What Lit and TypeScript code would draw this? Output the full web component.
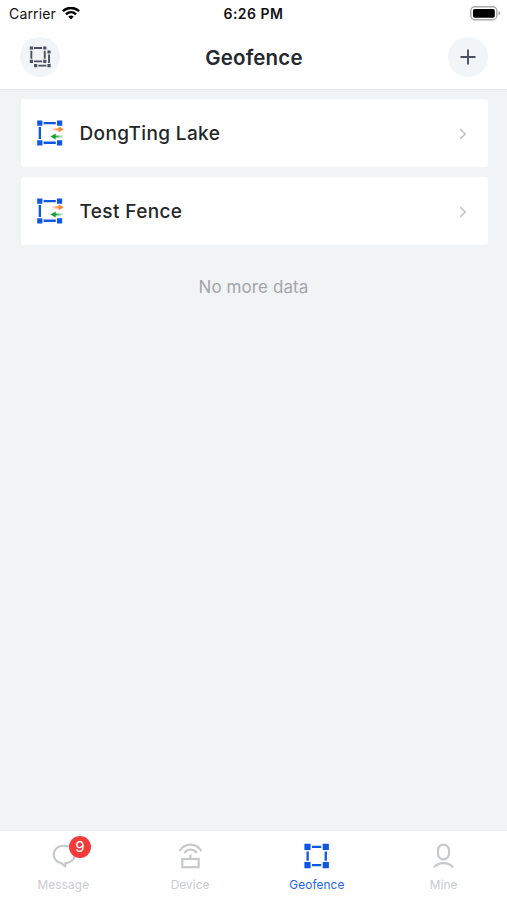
import { LitElement, html, svg, css } from "lit";
import { customElement, property } from "lit/decorators.js";

const wifi = html`<svg width="18" height="14" viewBox="0 0 18 14" fill="none" stroke="#000" stroke-width="2.5">
  <path d="M.9 4.2C5.5-.2 12.5-.2 17.1 4.2" />
  <path d="M4 7.4C6.9 4.6 11.1 4.6 14 7.4" />
  <path d="M6.3 9.6C7.900 8.100 10.100 8.100 11.700 9.600L9 12.400Z" fill="#000" stroke="none" />
</svg>`;

const battery = html`<svg width="31" height="15" viewBox="0 0 31 15">
  <rect x=".8" y=".8" width="26" height="13" rx="4" fill="#fff" stroke="#a9a9a9" stroke-width="1.4" />
  <rect x="3" y="3" width="21.8" height="8.8" rx="1.8" fill="#000" />
  <path d="M28.4 5.2C31 5.8 31 8.8 28.4 9.4Z" fill="#a9a9a9" />
</svg>`;

const layers = html`<svg width="24" height="24" viewBox="0 0 24 24" fill="#4b5160">
  <path d="M1.8 1.4H5v3.2H1.8zM15.2 1.4h3.2v3.2h-3.2zM1.8 14.8H5V18H1.8zM15.2 14.8h3.2V18h-3.2zM19.4 5.4h3.2v3.2h-3.2zM6 19h3.2v3.2H6zM19.4 19h3.2v3.2h-3.2z" />
  <path d="M6 2.1h8.2V4H6zM6 15.4h8.2v1.9H6zM2.4 5.7h1.9v8.1H2.4zM15.8 5.7h1.9v8.1h-1.9zM20.1 9.6H22V18h-1.9zM10.2 19.7h8.2v1.9h-8.2z" />
</svg>`;

const plus = html`<svg width="24" height="24" viewBox="0 0 24 24" stroke="#4b5160" stroke-width="1.9">
  <path d="M12 4.5v15M4.5 12h15" />
</svg>`;

const fence = html`<svg width="28" height="28" viewBox="0 0 28 28">
  <defs>
    <linearGradient id="out"><stop offset="0" stop-color="#fb8c3c" stop-opacity=".1" /><stop offset=".6" stop-color="#fb8432" /></linearGradient>
    <linearGradient id="in"><stop offset=".4" stop-color="#12a336" /><stop offset="1" stop-color="#12a336" stop-opacity=".1" /></linearGradient>
  </defs>
  <path d="M1.2 1.5h5.2v5.2H1.2zM21 1.5h5.2v5.2H21zM1.2 21.2h5.2v5.2H1.2zM21 21.2h5.2v5.2H21z" fill="#0c58e4" />
  <path d="M7.6 3h12.2v2.3H7.6zM7.6 22.6h12.2v2.3H7.6zM2.7 8H5v12H2.7z" fill="#0c58e4" />
  <path d="M15.5 9.2h7.2V7.4l5.1 2.9-5.1 2.9v-1.8h-7.2z" fill="url(#out)" />
  <path d="M27.5 16.5h-7.8v-2l-5.4 3 5.4 3v-2h7.8z" fill="url(#in)" />
</svg>`;

const chevron = html`<svg class="chevron" width="8" height="12" viewBox="0 0 8 12" fill="none" stroke="#c3c4c6" stroke-width="1.6">
  <path d="M1.2 1.2 6.2 6 1.2 10.8" />
</svg>`;

const icons = {
  message: svg`<path d="M13.6 4h4.8a8.400 8.400 0 0 1 2.2 16.500L17.200 21.400v3L13.400 21.200A8.640 8.640 0 0 1 13.600 4Z" fill="none" stroke="#c5c9cf" stroke-width="2.200" stroke-linejoin="round" />`,
  device: svg`<g fill="none" stroke="#c6c8ca" stroke-width="2.2">
    <path d="M4.600 9C9.900.5 21.100.5 26.400 9M9.300 11C12.500 6.300 18.500 6.300 21.700 11M15.500 12.500v5" />
    <rect x="7.300" y="17" width="16.400" height="8.200" /></g>`,
  geofence: svg`<path d="M3.400 1.800h6.200V8H3.400zM21.700 1.800h6.200V8h-6.200zM3.400 20.100h6.200v6.200H3.400zM21.700 20.100h6.200v6.200h-6.200z" fill="#0c58e4" />
    <path d="M11 3.800h9.200v2.300H11zM11 22h9.200v2.300H11zM5.500 9.600h2.300v9.100H5.500zM23.600 9.600h2.300v9.100h-2.300z" fill="#0c58e4" />`,
  mine: svg`<g fill="none" stroke="#c6c8ca" stroke-width="2.200">
    <rect x="10" y="2.700" width="11" height="14.600" rx="5.500" />
    <path d="M5.800 25.400C10.500 19.600 20.500 19.600 25.200 25.400" /></g>`,
};

type IconName = keyof typeof icons;

@customElement("fence-row")
class FenceRow extends LitElement {
  @property() name = "";
  static styles = css`
    :host { display: flex; align-items: center; height: 68px; padding: 0 21px 0 15px; box-sizing: border-box; background: #fff; border-radius: 3px; }
    .name { flex: 1; margin-left: 15.5px; font-size: 19px; font-weight: 500; letter-spacing: .38px; color: #252628; }
    svg { display: block; }
    .chevron { margin-top: 2px; }
  `;
  render() {
    return html`${fence}<span class="name">${this.name}</span>${chevron}`;
  }
}

@customElement("tab-item")
class TabItem extends LitElement {
  @property() icon: IconName = "message";
  @property() label = "";
  @property() badge = "";
  @property({ type: Boolean, reflect: true }) active = false;
  static styles = css`
    :host { flex: 1; display: flex; flex-direction: column; align-items: center; padding-top: 11px; color: #c9cbcf; }
    :host([active]) { color: #2463e6; }
    .icon { position: relative; width: 31px; height: 30px; }
    .badge { position: absolute; left: 21px; top: -6px; width: 22px; height: 22px; border-radius: 50%; background: #f33b3c; color: #fff; font-size: 15px; line-height: 22px; text-align: center; }
    .label { margin-top: 5px; font-size: 11.8px; line-height: 16px; letter-spacing: .12px; }
    svg { display: block; }
  `;
  render() {
    return html`<div class="icon">
        <svg width="31" height="30" viewBox="0 0 31 30">${icons[this.icon]}</svg>
        ${this.badge ? html`<span class="badge">${this.badge}</span>` : ""}
      </div>
      <span class="label">${this.label}</span>`;
  }
}

@customElement("app-root")
class AppRoot extends LitElement {
  static styles = css`
    :host { display: flex; flex-direction: column; height: 900px; overflow: hidden; background: #f1f3f5; font-family: Inter, "Liberation Sans", sans-serif; color: #25282e; }
    svg { display: block; }
    .status { display: grid; grid-template-columns: 1fr auto 1fr; align-items: center; height: 27px; padding: 0 6px; background: #fff; color: #111; }
    .carrier { display: flex; align-items: center; gap: 6px; margin-left: 3px; font-size: 14px; letter-spacing: .15px; }
    .time { font-size: 14px; font-weight: 600; letter-spacing: .5px; }
    .battery { justify-self: end; }
    header { display: flex; align-items: center; justify-content: space-between; height: 63px; box-sizing: border-box; padding: 0 19px 2px 20px; background: #fff; border-bottom: 1px solid #e3e5e7; }
    .round { display: grid; place-items: center; width: 40px; height: 40px; border-radius: 50%; background: #f2f5f7; }
    h1 { margin: 0; font-size: 20.5px; font-weight: 600; letter-spacing: .15px; }
    main { flex: 1; display: flex; flex-direction: column; gap: 10px; padding: 9px 19px 0 21px; }
    .end { margin: 21px 2px 0 0; text-align: center; font-size: 17px; line-height: 22px; letter-spacing: .08px; color: #a3a5a7; }
    nav { display: flex; height: 70px; box-sizing: border-box; background: #fff; border-top: 1px solid #e8eaec; }
  `;
  render() {
    return html`
      <div class="status">
        <span class="carrier">Carrier ${wifi}</span>
        <span class="time">6:26 PM</span>
        <span class="battery">${battery}</span>
      </div>
      <header>
        <span class="round">${layers}</span>
        <h1>Geofence</h1>
        <span class="round">${plus}</span>
      </header>
      <main>
        <fence-row name="DongTing Lake"></fence-row>
        <fence-row name="Test Fence"></fence-row>
        <p class="end">No more data</p>
      </main>
      <nav>
        <tab-item icon="message" label="Message" badge="9"></tab-item>
        <tab-item icon="device" label="Device"></tab-item>
        <tab-item icon="geofence" label="Geofence" active></tab-item>
        <tab-item icon="mine" label="Mine"></tab-item>
      </nav>
    `;
  }
}
